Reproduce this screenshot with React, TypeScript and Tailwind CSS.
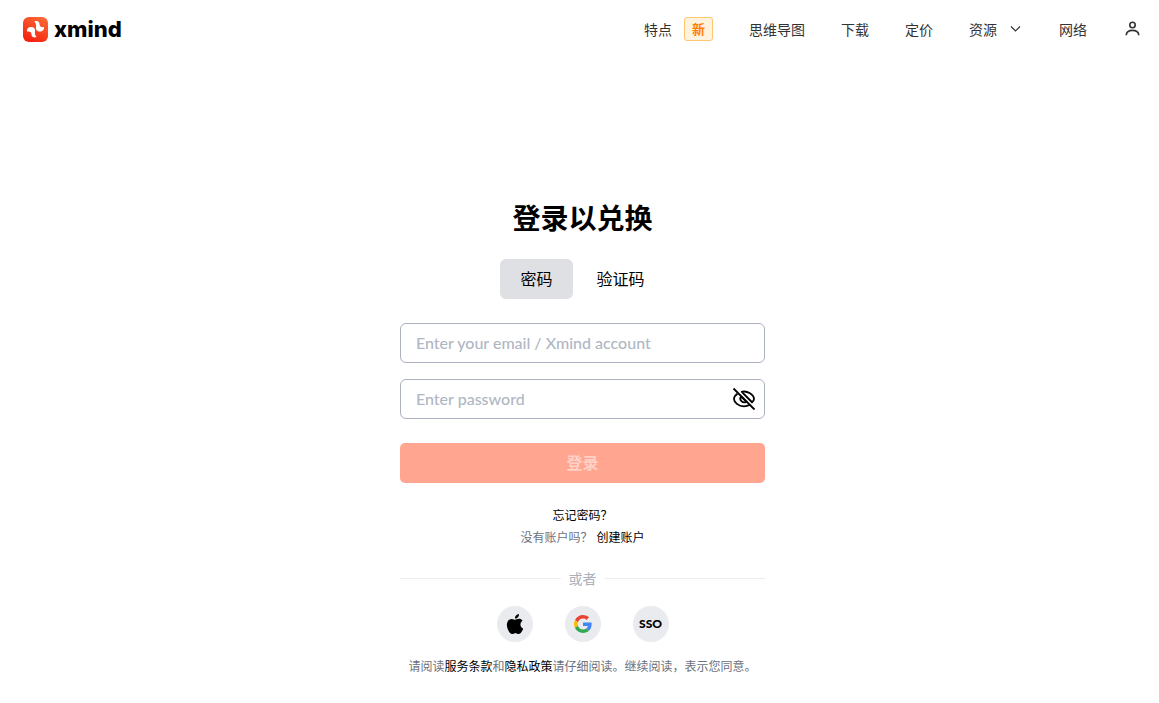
import React, { useState } from 'react'

const navLinks = [
  { label: '思维导图', href: '#mind-map' },
  { label: '下载', href: '#download' },
  { label: '定价', href: '#pricing' },
]

function LogoMark() {
  return (
    <svg className="h-[25px] w-[25px]" viewBox="0 0 50 50" aria-hidden="true">
      <defs>
        <linearGradient id="logo-bg" x1="0.8" y1="0" x2="0.3" y2="1">
          <stop offset="0" stopColor="#fb6a35" />
          <stop offset="1" stopColor="#f5200f" />
        </linearGradient>
      </defs>
      <rect width="50" height="50" rx="12" fill="url(#logo-bg)" />
      <g fill="#fff">
        <path d="M23 9C28 7 33 9 33 14C33 19 36 21 42 20C43 25 39 29 34 29C28 29 25 25 26 20C27 15 25 12 23 9Z" />
        <path d="M23 9C28 7 33 9 33 14C33 19 36 21 42 20C43 25 39 29 34 29C28 29 25 25 26 20C27 15 25 12 23 9Z" transform="rotate(180 25 24.5)" />
      </g>
    </svg>
  )
}

function ChevronIcon() {
  return (
    <svg className="h-3.5 w-3.5" viewBox="0 0 14 14" fill="none" stroke="currentColor" strokeWidth="1.2" aria-hidden="true">
      <path d="M2 4.5L6.5 9L11 4.5" />
    </svg>
  )
}

function UserIcon() {
  return (
    <svg className="h-[18px] w-[18px]" viewBox="0 0 18 18" fill="none" stroke="currentColor" strokeWidth="1.6" aria-hidden="true">
      <circle cx="9.5" cy="5" r="2.7" />
      <path d="M3.2 15.2C3.8 8.8 15.2 8.8 15.8 15.2" />
    </svg>
  )
}

function EyeOffIcon() {
  return (
    <svg className="h-6 w-6" viewBox="0 0 24 24" fill="none" stroke="currentColor" strokeWidth="1.8" aria-hidden="true">
      <path d="M1.5 1.5L22.5 22.5" />
      <path d="M5.5 6.7C3.3 8.2 2 10.3 2 12C2 15.3 6.4 19.3 12 19.3C14.2 19.3 16.2 18.7 17.8 17.8" />
      <path d="M9 5C15.5 3 22 8 22 12C22 13 21.2 14.2 20 15.2L18.8 14L10 5.2" />
      <path d="M8.9 9.7C6.8 12.7 10.7 17 14.3 14.7L9.5 9.9" />
    </svg>
  )
}

function AppleIcon() {
  return (
    <svg className="h-5 w-5" viewBox="0 0 24 24" fill="#000" aria-hidden="true">
      <path d="M12.152 6.896c-.948 0-2.415-1.078-3.96-1.04-2.04.027-3.91 1.183-4.961 3.014-2.117 3.675-.546 9.103 1.519 12.09 1.013 1.454 2.208 3.09 3.792 3.039 1.52-.065 2.09-.987 3.935-.987 1.831 0 2.35.987 3.96.948 1.637-.026 2.676-1.48 3.676-2.948 1.156-1.688 1.636-3.325 1.662-3.415-.039-.013-3.182-1.221-3.22-4.857-.026-3.04 2.48-4.494 2.597-4.559-1.429-2.09-3.623-2.324-4.39-2.376-2-.156-3.675 1.09-4.61 1.09zM15.53 3.83c.843-1.012 1.4-2.427 1.245-3.83-1.207.052-2.662.805-3.532 1.818-.78.896-1.454 2.338-1.273 3.714 1.338.104 2.715-.688 3.559-1.701" />
    </svg>
  )
}

function GoogleIcon() {
  return (
    <svg className="h-[18px] w-[18px]" viewBox="0 0 48 48" aria-hidden="true">
      <path fill="#ea4335" d="M24 9.5c3.54 0 6.71 1.22 9.21 3.6l6.85-6.85C35.9 2.38 30.47 0 24 0 14.62 0 6.51 5.38 2.56 13.22l7.98 6.19C12.43 13.72 17.74 9.5 24 9.5z" />
      <path fill="#4285f4" d="M46.98 24.55c0-1.57-.15-3.09-.38-4.55H24v9.02h12.94c-.58 2.96-2.26 5.48-4.78 7.18l7.73 6c4.51-4.18 7.09-10.36 7.09-17.65z" />
      <path fill="#fbbc05" d="M10.53 28.59A14.5 14.5 0 0 1 9.77 24c0-1.6.28-3.14.76-4.59l-7.98-6.19A23.99 23.99 0 0 0 0 24c0 3.88.92 7.54 2.56 10.78l7.97-6.19z" />
      <path fill="#34a853" d="M24 48c6.48 0 11.93-2.13 15.89-5.81l-7.73-6c-2.15 1.45-4.92 2.3-8.16 2.3-6.26 0-11.57-4.22-13.47-9.91l-7.98 6.19C6.51 42.62 14.62 48 24 48z" />
    </svg>
  )
}

function Header() {
  return (
    <header className="flex h-[58px] items-center justify-between pr-[18px] pl-[23px]">
      <a href="#home" className="flex items-center gap-1.5 text-black">
        <LogoMark />
        <span className="font-[Inter,sans-serif] text-[22px] leading-6 font-extrabold">xmind</span>
      </a>
      <nav className="flex items-center gap-9 text-sm text-[#333]">
        <a href="#features" className="flex items-center gap-3">
          特点
          <span className="flex h-6 items-center rounded-[3px] border border-[#ffc670] bg-[#fff3e0] px-[7px] text-[13px] font-bold text-[#ff8000]">
            新
          </span>
        </a>
        {navLinks.map((link) => (
          <a key={link.label} href={link.href}>
            {link.label}
          </a>
        ))}
        <button type="button" className="flex items-center gap-3">
          资源
          <ChevronIcon />
        </button>
        <a href="#web">网络</a>
        <button type="button" aria-label="账户">
          <UserIcon />
        </button>
      </nav>
    </header>
  )
}

const inputClass =
  'h-10 w-full rounded-md border border-[#abb1bf] bg-white px-[15px] pb-0.5 font-[Lato,sans-serif] text-base font-medium text-black placeholder:text-[#b0b7c3] outline-none'

export default function App() {
  const [mode, setMode] = useState('password')
  const [showPassword, setShowPassword] = useState(false)

  const tabClass = (name: string) =>
    mode === name ? 'h-10 rounded-md bg-[#dfe0e4] px-5 pb-0.5' : 'h-10 rounded-md px-5 pb-0.5'

  return (
    <div className="min-h-screen bg-white font-['Noto_Sans_CJK_SC',sans-serif] text-black">
      <Header />
      <main className="flex justify-center pt-[141px] pb-6 pl-1.5">
        <div className="flex w-full max-w-[365px] flex-col items-center">
          <h1 className="text-[28px] leading-9 font-bold">登录以兑换</h1>

          <div className="mt-6 flex gap-1 text-base">
            <button type="button" className={tabClass('password')} onClick={() => setMode('password')}>
              密码
            </button>
            <button type="button" className={tabClass('code')} onClick={() => setMode('code')}>
              验证码
            </button>
          </div>

          <form className="mt-6 w-full" onSubmit={(e) => e.preventDefault()}>
            <input
              type="text"
              aria-label="Email"
              placeholder="Enter your email / Xmind account"
              className={inputClass}
            />
            <div className="relative mt-4">
              <input
                type={showPassword ? 'text' : 'password'}
                aria-label="Password"
                placeholder="Enter password"
                className={inputClass}
              />
              <button
                type="button"
                aria-label="显示密码"
                className="absolute inset-y-0 right-[9px] flex items-center"
                onClick={() => setShowPassword(!showPassword)}
              >
                <EyeOffIcon />
              </button>
            </div>
            <button
              type="submit"
              disabled
              className="mt-6 h-10 w-full rounded-[5px] bg-[#ffa590] pb-0.5 text-base font-bold text-[#ffd0c5]"
            >
              登录
            </button>
          </form>

          <div className="mt-[21px] flex flex-col items-center text-xs leading-[22px]">
            <a href="#forgot">忘记密码？</a>
            <p className="flex gap-1 text-[#6b7280]">
              没有账户吗？
              <a href="#signup" className="text-black">
                创建账户
              </a>
            </p>
          </div>

          <div className="mt-5 flex w-full items-center gap-2 text-sm leading-5 text-[#a9afbc]">
            <div className="h-px flex-1 bg-[#ebecf0]" />
            或者
            <div className="h-px flex-1 bg-[#ebecf0]" />
          </div>

          <div className="mt-[18px] flex gap-8">
            <button type="button" aria-label="Apple" className="flex h-9 w-9 items-center justify-center rounded-full bg-[#eaebef]">
              <AppleIcon />
            </button>
            <button type="button" aria-label="Google" className="flex h-9 w-9 items-center justify-center rounded-full bg-[#eaebef]">
              <GoogleIcon />
            </button>
            <button
              type="button"
              className="flex h-9 w-9 items-center justify-center rounded-full bg-[#eaebef] font-[Lato,sans-serif] text-xs font-black"
            >
              SSO
            </button>
          </div>

          <p className="mt-3.5 text-xs leading-5 text-[#6b7280]">
            请阅读
            <a href="#terms" className="text-black">服务条款</a>
            和
            <a href="#privacy" className="text-black">隐私政策</a>
            请仔细阅读。继续阅读，表示您同意。
          </p>
        </div>
      </main>
    </div>
  )
}
